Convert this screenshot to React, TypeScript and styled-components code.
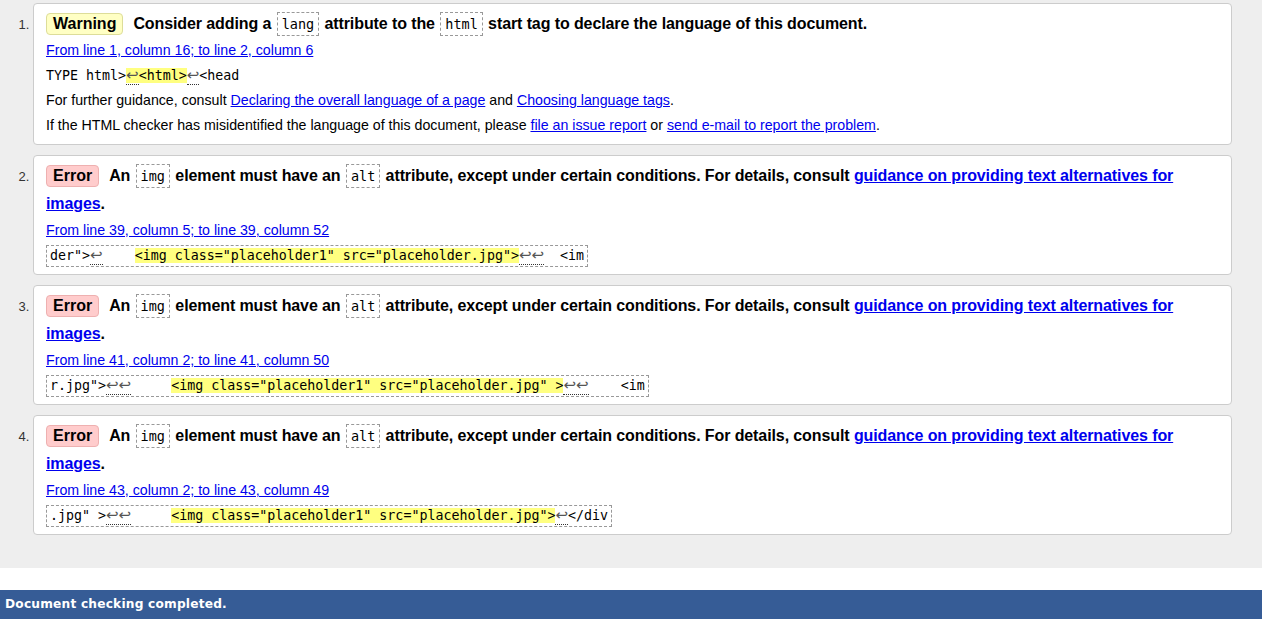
import React from "react";
import styled, { createGlobalStyle } from "styled-components";

const GlobalStyle = createGlobalStyle`
  html, body {
    margin: 0;
    padding: 0;
    background: #fff;
  }
  body {
    font-family: "Liberation Sans", Arial, sans-serif;
    font-size: 14.2px;
    color: #000;
  }
`;

const Results = styled.div`
  background: #eeeeee;
  padding: 3px 30px 33px 0;
`;

const List = styled.ol`
  margin: 0;
  padding: 0 0 0 33px;
  list-style: decimal outside;
`;

const Card = styled.li`
  background: #fff;
  border: 1px solid #cccccc;
  border-radius: 4px;
  padding: 6px 12px 6px 12px;
  margin-bottom: 10px;
  &::marker {
    font-size: 13px;
    color: #333;
  }
  &:last-child {
    margin-bottom: 0;
  }
`;

const Heading = styled.p`
  margin: 0;
  font-weight: bold;
  font-size: 16px;
  line-height: 28px;
  letter-spacing: -0.1px;
`;

const Badge = styled.span<{ $kind: "warning" | "error" }>`
  display: inline-block;
  line-height: 20px;
  padding: 0 6px;
  margin-right: 10px;
  border-radius: 4px;
  letter-spacing: 0;
  background: ${(p) => (p.$kind === "warning" ? "#ffffc4" : "#ffcccc")};
  border: 1px solid ${(p) => (p.$kind === "warning" ? "#dddd99" : "#eeb0b0")};
`;

const Code = styled.code`
  font-family: "DejaVu Sans Mono", monospace;
  font-weight: normal;
  font-size: 13.5px;
  letter-spacing: 0;
  border: 1px dashed #999;
  padding: 3px 4px 3px;
  margin: 0 1px;
  background: #fff;
`;

const Location = styled.p`
  margin: 0;
  line-height: 25px;
`;

const Link = styled.a`
  color: #0000ee;
  text-decoration: underline;
  cursor: pointer;
`;

const Extract = styled.p`
  margin: 0;
  line-height: 25px;
  font-family: "DejaVu Sans Mono", monospace;
  font-size: 13.3px;
  white-space: pre;
`;

const ExtractBox = styled.span`
  border: 1px dashed #999;
  padding: 2px 3px 3px 3px;
`;

const Mark = styled.mark`
  background: #ffff80;
  color: inherit;
`;

const Lf = styled.b`
  font-family: "DejaVu Sans", sans-serif;
  font-weight: normal;
  font-size: 15px;
  line-height: 1;
  color: #555;
  border-bottom: 1px dotted #333;
`;

const Info = styled.p`
  margin: 0;
  line-height: 25px;
`;

const Spacer = styled.div`
  height: 22px;
  background: #fff;
`;

const StatusBar = styled.div`
  background: #365c96;
  color: #fff;
  font-family: "DejaVu Sans", Verdana, sans-serif;
  font-weight: bold;
  font-size: 12.2px;
  line-height: 29px;
  padding: 0 5px;
  letter-spacing: 0.2px;
`;

type ErrorItem = {
  from: string;
  before: string;
  leadLf: string;
  leadGap: string;
  highlight: string;
  tailLf: string;
  after: string;
};

const errors: ErrorItem[] = [
  {
    from: "From line 39, column 5; to line 39, column 52",
    before: 'der">',
    leadLf: "↩",
    leadGap: "    ",
    highlight: '<img class="placeholder1" src="placeholder.jpg">',
    tailLf: "↩↩",
    after: "  <im",
  },
  {
    from: "From line 41, column 2; to line 41, column 50",
    before: 'r.jpg">',
    leadLf: "↩↩",
    leadGap: "     ",
    highlight: '<img class="placeholder1" src="placeholder.jpg" >',
    tailLf: "↩↩",
    after: "    <im",
  },
  {
    from: "From line 43, column 2; to line 43, column 49",
    before: '.jpg" >',
    leadLf: "↩↩",
    leadGap: "     ",
    highlight: '<img class="placeholder1" src="placeholder.jpg">',
    tailLf: "↩",
    after: "</div",
  },
];

const ErrorCard = ({ item }: { item: ErrorItem }) => (
  <Card>
    <Heading>
      <Badge $kind="error">Error</Badge>
      An <Code>img</Code> element must have an <Code>alt</Code> attribute,
      except under certain conditions. For details, consult{" "}
      <Link>guidance on providing text alternatives for images</Link>.
    </Heading>
    <Location>
      <Link>{item.from}</Link>
    </Location>
    <Extract>
      <ExtractBox>
        {item.before}
        <Lf>{item.leadLf}</Lf>
        {item.leadGap}
        <Mark>{item.highlight}</Mark>
        <Lf>{item.tailLf}</Lf>
        {item.after}
      </ExtractBox>
    </Extract>
  </Card>
);

export default function App() {
  return (
    <>
      <GlobalStyle />
      <Results>
        <List>
          <Card>
            <Heading>
              <Badge $kind="warning">Warning</Badge>
              Consider adding a <Code>lang</Code> attribute to the{" "}
              <Code>html</Code> start tag to declare the language of this
              document.
            </Heading>
            <Location>
              <Link>From line 1, column 16; to line 2, column 6</Link>
            </Location>
            <Extract>
              TYPE html&gt;
              <Mark>
                <Lf>↩</Lf>&lt;html&gt;
              </Mark>
              <Lf>↩</Lf>&lt;head
            </Extract>
            <Info>
              For further guidance, consult{" "}
              <Link>Declaring the overall language of a page</Link> and{" "}
              <Link>Choosing language tags</Link>.
            </Info>
            <Info>
              If the HTML checker has misidentified the language of this
              document, please <Link>file an issue report</Link> or{" "}
              <Link>send e-mail to report the problem</Link>.
            </Info>
          </Card>
          {errors.map((e, i) => (
            <ErrorCard key={i} item={e} />
          ))}
        </List>
      </Results>
      <Spacer />
      <StatusBar>Document checking completed.</StatusBar>
    </>
  );
}
